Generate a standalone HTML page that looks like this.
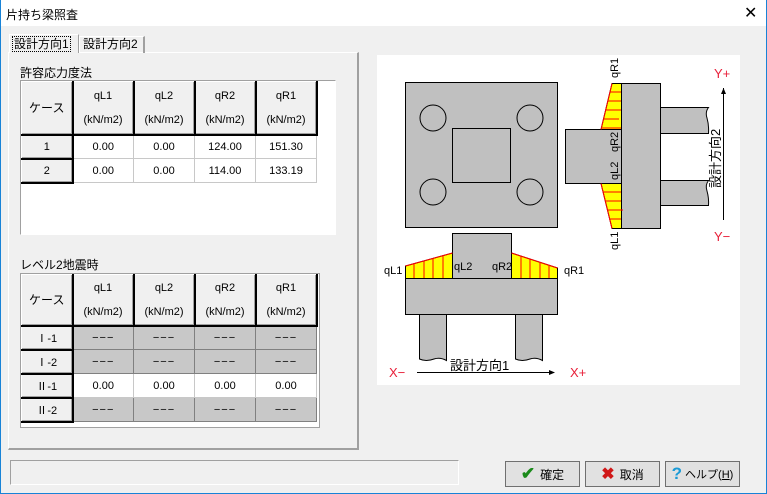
<!DOCTYPE html>
<html><head><meta charset="utf-8"><style>
*{margin:0;padding:0;box-sizing:border-box}
body{width:767px;height:494px;background:#f0f0f0;font-family:"Liberation Sans","Noto Sans CJK JP",sans-serif;font-size:12px;color:#000;position:relative;overflow:hidden}
.a{position:absolute}
.frame{left:0;top:0;width:767px;height:494px;border:1px solid #1883d7;border-top:none}
.title{left:1px;top:0;width:765px;height:26px;background:#fff}
table{border-collapse:collapse;position:absolute;table-layout:fixed}
td{height:24px;text-align:center;font-size:11px;border:1px solid #c8c8c8;background:#fff}
td.h{background:#f0f0f0;border-top:1px solid #fff;border-left:1px solid #fff;border-right:2px solid #000;border-bottom:2px solid #000;box-shadow:inset -1px -1px 0 #a0a0a0}
td.g{background:#c8c8c8;border:1px solid #808080;letter-spacing:1px}
.btn{height:26px;width:75px;background:#e1e1e1;border:1px solid #707070;display:flex;align-items:center;justify-content:center;font-size:12px;gap:5px;white-space:nowrap}
</style></head><body>
<div class="a frame"></div>
<div class="a title"></div>
<div class="a" style="left:6px;top:6px;font-size:12px">片持ち梁照査</div>
<div class="a" style="left:744px;top:3px;font-size:16px">✕</div>
<div class="a" style="left:8px;top:52px;width:351px;height:398px;border:1px solid #fff;border-right:2px solid #a0a0a0;border-bottom:2px solid #a0a0a0"></div>
<div class="a" style="left:9px;top:34px;width:70px;height:19px;border:1px solid #fff;border-right:1px solid #a0a0a0;background:#f0f0f0;border-bottom:none"></div>
<div class="a" style="left:12px;top:36px;padding:0 1px;border:1px dotted #000;font-size:12px;line-height:14px">設計方向1</div>
<div class="a" style="left:79px;top:36px;width:66px;height:17px;border:1px solid #fff;border-right:2px solid #a0a0a0;border-bottom:none"></div>
<div class="a" style="left:83px;top:37px;font-size:12px;line-height:14px">設計方向2</div>
<div class="a" style="left:20px;top:64px">許容応力度法</div>
<div class="a" style="left:20px;top:80px;width:316px;height:155px;background:#fff;border:1px solid #a0a0a0;border-right-color:#fff;border-bottom-color:#fff"></div>
<table style="left:21px;top:81px;width:296px">
<colgroup><col style="width:51px"><col style="width:61px"><col style="width:61px"><col style="width:61px"><col style="width:61px"></colgroup>
<tr><td class="h" style="height:53px;font-size:12px">ケース</td><td class="h" style="line-height:24px">qL1<br>(kN/m2)</td><td class="h" style="line-height:24px">qL2<br>(kN/m2)</td><td class="h" style="line-height:24px">qR2<br>(kN/m2)</td><td class="h" style="line-height:24px">qR1<br>(kN/m2)</td></tr>
<tr><td class="h">1</td><td>0.00</td><td>0.00</td><td>124.00</td><td>151.30</td></tr>
<tr><td class="h">2</td><td>0.00</td><td>0.00</td><td>114.00</td><td>133.19</td></tr>
</table>
<div class="a" style="left:20px;top:256px">レベル2地震時</div>
<div class="a" style="left:20px;top:273px;width:300px;height:155px;background:#fff;border:1px solid #a0a0a0"></div>
<table style="left:21px;top:274px;width:296px">
<colgroup><col style="width:51px"><col style="width:61px"><col style="width:61px"><col style="width:61px"><col style="width:61px"></colgroup>
<tr><td class="h" style="height:51px;font-size:12px">ケース</td><td class="h" style="line-height:24px">qL1<br>(kN/m2)</td><td class="h" style="line-height:24px">qL2<br>(kN/m2)</td><td class="h" style="line-height:24px">qR2<br>(kN/m2)</td><td class="h" style="line-height:24px">qR1<br>(kN/m2)</td></tr>
<tr><td class="h">Ⅰ-1</td><td class="g">−−−</td><td class="g">−−−</td><td class="g">−−−</td><td class="g">−−−</td></tr>
<tr><td class="h">Ⅰ-2</td><td class="g">−−−</td><td class="g">−−−</td><td class="g">−−−</td><td class="g">−−−</td></tr>
<tr><td class="h">Ⅱ-1</td><td>0.00</td><td>0.00</td><td>0.00</td><td>0.00</td></tr>
<tr><td class="h">Ⅱ-2</td><td class="g">−−−</td><td class="g">−−−</td><td class="g">−−−</td><td class="g">−−−</td></tr>
</table>
<svg class="a" style="left:0;top:0" width="767" height="494" font-family="Liberation Sans,sans-serif" font-size="11">
<rect x="377" y="55" width="363" height="330" fill="#fff"/>
<g fill="#c0c0c0" stroke="#000" stroke-width="1">
<rect x="405.5" y="82.5" width="152" height="145"/>
<rect x="452.5" y="128.5" width="58" height="54" fill="none"/>
<circle cx="433" cy="118" r="13" fill="none"/><circle cx="530" cy="118" r="13" fill="none"/>
<circle cx="433" cy="192" r="13" fill="none"/><circle cx="530" cy="192" r="13" fill="none"/>
<rect x="565.5" y="129.5" width="56" height="54"/>
<path d="M660.5 107.5H708.5Q705 112 707 118Q709 125 708.5 133.5H660.5Z"/>
<path d="M660.5 180.5H708.5Q705 185 707 191Q709 198 708.5 205.5H660.5Z"/>
<rect x="621.5" y="83.5" width="39" height="145"/>
<polygon points="612,83.5 621.5,83.5 621.5,129.5 601,129.5" fill="#ff0"/>
<polygon points="601,183.5 621.5,183.5 621.5,228.5 612,228.5" fill="#ff0"/>
<rect x="452.5" y="233.5" width="59" height="45"/>
<path d="M419.5 314.5H446.5V360.5Q440 357 434 359Q426 362 419.5 359Z"/>
<path d="M515.5 314.5H542.5V360.5Q536 357 530 359Q522 362 515.5 359Z"/>
<rect x="405.5" y="278.5" width="152" height="36"/>
<polygon points="405.5,266 452.5,253 452.5,278.5 405.5,278.5" fill="#ff0"/>
<polygon points="511.5,253 557.5,268 557.5,278.5 511.5,278.5" fill="#ff0"/>
</g>
<g stroke="#ff0000" stroke-width="1">
<path d="M612 83.5L601 129.5M601 183.5L612 228.5M405.5 266L452.5 253M511.5 253L557.5 268"/>
<path d="M610 92h11M608 101h13M606 110h15M604 119h15M602 128h19M603 192h18M605 201h16M607 210h16M609 219h12"/>
<path d="M414 264v14M424 261v17M433 259v19M443 256v22M521 256v22M530 259v19M540 262v16M549 265v13"/>
</g>
<g stroke="#000"><path d="M417 372.5h137M723.5 88v132"/></g>
<polygon points="555,372.5 549,370 549,375" fill="#000"/>
<polygon points="723.5,88 721,94 726,94" fill="#000"/>
<g fill="#e8203a" font-size="13"><text x="389" y="377">X−</text><text x="570" y="377">X+</text><text x="714" y="78">Y+</text><text x="714" y="241">Y−</text></g>
<text x="450" y="370" font-size="13" font-family="Liberation Sans,Noto Sans CJK JP,sans-serif">設計方向1</text>
<text x="384" y="274">qL1</text><text x="454" y="270">qL2</text><text x="492" y="270">qR2</text><text x="564" y="274">qR1</text>
<g font-size="11">
<text transform="translate(618,78) rotate(-90)">qR1</text>
<text transform="translate(618,152) rotate(-90)">qR2</text>
<text transform="translate(618,180) rotate(-90)">qL2</text>
<text transform="translate(618,250) rotate(-90)">qL1</text>
</g>
<text transform="translate(720,188) rotate(-90)" font-size="13" font-family="Liberation Sans,Noto Sans CJK JP,sans-serif">設計方向2</text>
</svg>
<div class="a" style="left:10px;top:460px;width:449px;height:25px;border:1px solid #a0a0a0;border-right-color:#fff;border-bottom-color:#fff"></div>
<div class="a btn" style="left:505px;top:461px"><span style="color:#1a8a1a;font-size:17px;font-weight:bold">✔</span>確定</div>
<div class="a btn" style="left:585px;top:461px"><span style="color:#d01818;font-size:16px;font-weight:bold">✖</span>取消</div>
<div class="a btn" style="left:665px;top:461px;gap:3px"><span style="color:#1a9ad6;font-size:17px;font-weight:bold">?</span><span style="font-size:11px">ヘルプ(<u>H</u>)</span></div>
</body></html>
